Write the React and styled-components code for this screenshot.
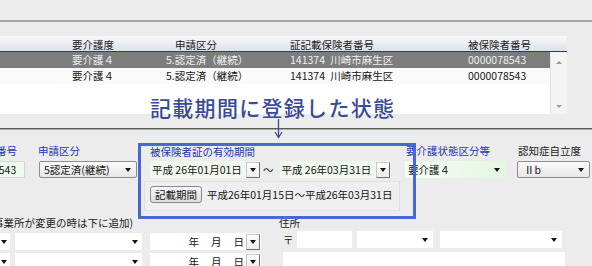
import React from "react";
import styled, { createGlobalStyle, css } from "styled-components";

const Global = createGlobalStyle`
  html, body { margin: 0; padding: 0; background: #ececec; }
  body { font-family: "Noto Sans CJK JP", "Noto Sans", sans-serif; }
`;

const Page = styled.div`
  position: relative;
  width: 592px;
  height: 266px;
  overflow: hidden;
  background: #ececec;
  font-family: "Noto Sans CJK JP", "Noto Sans", sans-serif;
  font-size: 10.5px;
  color: #141414;
`;

const TopStrip = styled.div`
  height: 20px;
  background: #ebebeb;
  border-bottom: 2px solid #a3a3a3;
`;

const ListWrap = styled.div`
  padding-top: 14px;
  width: 567px;
`;

const HeaderRow = styled.div`
  display: grid;
  grid-template-columns: 72px 94px 124px 178px 1fr;
  height: 15px;
  line-height: 17px;
  background: linear-gradient(#f8f9fb, #dce2e9);
  border-bottom: 1px solid #27415f;
  color: #222;
`;

const Cell = styled.div`
  white-space: nowrap;
  padding-left: ${(p) => p.$indent || 0}px;
  word-spacing: 3px;
`;

const ListBody = styled.div`
  display: flex;
  height: 62px;
  background: #fff;
`;

const Rows = styled.div`
  width: 550px;
`;

const Row = styled.div`
  display: grid;
  grid-template-columns: 72px 94px 124px 178px 1fr;
  height: 16px;
  line-height: 16px;
  ${(p) =>
    p.$selected
      ? css`
          background: #7d7d7d;
          color: #f1f1f1;
        `
      : css`
          background: #fafafa;
          color: #151515;
        `}
`;

const Scrollbar = styled.div`
  width: 17px;
  display: flex;
  flex-direction: column;
  justify-content: space-between;
  align-items: center;
  padding: 9px 0 6px;
  box-sizing: border-box;
  background: #f4f4f4;
  border-left: 1px solid #e4e4e4;
`;

const ScrollArrow = styled.span`
  width: 0;
  height: 0;
  border-left: 3px solid transparent;
  border-right: 3px solid transparent;
  ${(p) =>
    p.$down
      ? css`border-top: 3px solid #9a9a9a;`
      : css`border-bottom: 3px solid #9a9a9a;`}
`;

const Caption = styled.div`
  position: absolute;
  left: 150px;
  top: 95px;
  font-size: 21px;
  line-height: 24px;
  letter-spacing: 1.3px;
  font-weight: 500;
  color: #3b4a96;
  white-space: nowrap;
`;

const CalloutArrow = styled.svg`
  position: absolute;
  left: 274px;
  top: 119px;
`;

const Divider = styled.div`
  margin-top: 14px;
  border-top: 1px solid #5a5a5a;
  border-bottom: 1px solid #a9a9a9;
`;

const FormRow = styled.div`
  display: flex;
  align-items: flex-start;
  padding-top: 13px;
`;

const Group = styled.div`
  flex: none;
  width: ${(p) => p.$w}px;
  margin-left: ${(p) => p.$ml || 0}px;
  padding-top: 1px;
`;

const Label = styled.div`
  height: 13px;
  line-height: 13px;
  white-space: nowrap;
  color: ${(p) => (p.$blue ? "#2536b0" : "#222")};
  margin-left: ${(p) => p.$ml || 0}px;
  padding-left: ${(p) => p.$pl || 0}px;
`;

const TextField = styled.div`
  box-sizing: border-box;
  margin-top: 4px;
  height: 17px;
  line-height: 15px;
  padding-left: 3px;
  background: #effaec;
  border: 1px solid #d3d6d3;
  white-space: nowrap;
`;

const Select = styled.div`
  box-sizing: border-box;
  flex: none;
  display: flex;
  align-items: center;
  justify-content: space-between;
  width: ${(p) => p.$w}px;
  height: 17px;
  margin-top: ${(p) => p.$mt ?? 0}px;
  margin-left: ${(p) => p.$ml || 0}px;
  padding: 0 ${(p) => p.$pr ?? 6}px 0 ${(p) => p.$pl ?? 3}px;
  line-height: 15px;
  white-space: nowrap;
  ${(p) =>
    p.$variant === "combo" &&
    css`
      border: 1px solid #8d8d8d;
      border-radius: 2px;
      background: linear-gradient(#fbfbfb, #e7e7e7);
    `}
  ${(p) =>
    p.$variant === "green" &&
    css`
      background: linear-gradient(90deg, #f6fcf5, #e4f6e2);
    `}
  ${(p) =>
    p.$variant === "plain" &&
    css`
      background: #ffffff;
    `}
`;

const DropArrow = styled.span`
  flex: none;
  width: 0;
  height: 0;
  border-left: 3.5px solid transparent;
  border-right: 3.5px solid transparent;
  border-top: 4px solid #151515;
`;

const HighlightBox = styled.div`
  position: relative;
  z-index: 2;
  flex: none;
  box-sizing: border-box;
  width: 278px;
  margin-left: 1px;
  padding: 0 6px 5px 9px;
  border: 3px solid #4669d2;
`;

const BoxLabel = styled.div`
  height: 11px;
  line-height: 11px;
  white-space: nowrap;
  color: #2536b0;
`;

const DateRow = styled.div`
  display: flex;
  align-items: center;
  margin-top: 4px;
`;

const DateField = styled.div`
  box-sizing: border-box;
  flex: none;
  display: flex;
  align-items: center;
  justify-content: ${(p) => (p.$end ? "flex-end" : "space-between")};
  gap: ${(p) => (p.$end ? "2px" : "0")};
  width: ${(p) => p.$w}px;
  height: 17px;
  margin-left: ${(p) => p.$ml || 0}px;
  padding-left: 2px;
  padding-right: ${(p) => p.$pr || 0}px;
  line-height: 15px;
  white-space: nowrap;
  background: ${(p) => (p.$green ? "#f1f9ef" : "#ffffff")};
`;

const YMD = styled.span`
  display: flex;
  gap: 12px;
`;

const DropButton = styled.span`
  box-sizing: border-box;
  flex: none;
  display: flex;
  align-items: center;
  justify-content: center;
  width: 14px;
  height: 16px;
  background: linear-gradient(#fdfdfd, #ececec);
  border: 1px solid #c9c9c9;
  border-right-color: #6f6f6f;
  border-bottom-color: #6f6f6f;
`;

const Tilde = styled.span`
  flex: none;
  margin: 0 6px 0 3px;
`;

const PeriodPanel = styled.div`
  display: flex;
  align-items: center;
  margin: 3px 7px 0 -6px;
  padding: 4px 5px 7px;
  background: #efefef;
  border: 1px solid #e0e0e0;
`;

const PeriodButton = styled.span`
  box-sizing: border-box;
  flex: none;
  width: 52px;
  height: 17px;
  line-height: 15px;
  text-align: center;
  border: 1px solid #8a8a8a;
  border-radius: 3px;
  background: linear-gradient(#f8f8f8, #dddddd);
`;

const PeriodText = styled.span`
  margin-left: 5px;
  white-space: nowrap;
`;

const Lower = styled.div`
  display: flex;
  margin-top: -4px;
`;

const LeftCol = styled.div`
  flex: none;
  width: 262px;
  padding-top: 1px;
`;

const RightCol = styled.div`
  flex: none;
  width: 286px;
  margin-left: 17px;
  padding-top: 1px;
`;

const FieldRow = styled.div`
  display: flex;
  align-items: center;
  margin-top: ${(p) => p.$mt}px;
`;

const PostMark = styled.span`
  flex: none;
  width: 11px;
  margin: 0 3px 0 4px;
  line-height: 15px;
`;

const PostField = styled.div`
  flex: none;
  width: 55px;
  height: 17px;
  background: #fff;
`;

const AddressArea = styled.div`
  margin: 4px 0 0 4px;
  width: 282px;
  height: 30px;
  background: #fff;
`;

const periodDate = (text) => (
  <DateField $w={110} $green>
    <span>{text}</span>
    <DropButton>
      <DropArrow />
    </DropButton>
  </DateField>
);

const EmptyDate = () => (
  <DateField $w={111} $end $pr={1} $ml={8}>
    <YMD>
      <span>年</span>
      <span>月</span>
      <span>日</span>
    </YMD>
    <DropButton>
      <DropArrow />
    </DropButton>
  </DateField>
);

const LowerFieldRow = ({ mt }) => (
  <FieldRow $mt={mt}>
    <Select $w={18} $ml={-8} $variant="plain" $pr={3}>
      <span />
      <DropArrow />
    </Select>
    <Select $w={127} $ml={5} $variant="plain" $pr={4}>
      <span />
      <DropArrow />
    </Select>
    <EmptyDate />
  </FieldRow>
);

export default function App() {
  return (
    <Page>
      <Global />
      <TopStrip />
      <ListWrap>
        <HeaderRow>
          <Cell />
          <Cell>要介護度</Cell>
          <Cell $indent={9}>申請区分</Cell>
          <Cell>証記載保険者番号</Cell>
          <Cell>被保険者番号</Cell>
        </HeaderRow>
        <ListBody>
          <Rows>
            <Row $selected>
              <Cell />
              <Cell>要介護４</Cell>
              <Cell>5.認定済（継続）</Cell>
              <Cell>141374 川崎市麻生区</Cell>
              <Cell>0000078543</Cell>
            </Row>
            <Row>
              <Cell />
              <Cell>要介護４</Cell>
              <Cell>5.認定済（継続）</Cell>
              <Cell>141374 川崎市麻生区</Cell>
              <Cell>0000078543</Cell>
            </Row>
          </Rows>
          <Scrollbar>
            <ScrollArrow />
            <ScrollArrow $down />
          </Scrollbar>
        </ListBody>
      </ListWrap>
      <Divider />

      <FormRow>
        <Group $w={71} $ml={-46}>
          <Label $blue>被保険者番号</Label>
          <TextField>0000078543</TextField>
        </Group>
        <Group $w={99} $ml={13}>
          <Label $blue>申請区分</Label>
          <Select $w={98} $ml={1} $mt={4} $variant="combo" $pr={5} $pl={4}>
            <span>5認定済(継続)</span>
            <DropArrow />
          </Select>
        </Group>
        <HighlightBox>
          <BoxLabel>被保険者証の有効期間</BoxLabel>
          <DateRow>
            {periodDate("平成 26年01月01日")}
            <Tilde>～</Tilde>
            {periodDate("平成 26年03月31日")}
          </DateRow>
          <PeriodPanel>
            <PeriodButton>記載期間</PeriodButton>
            <PeriodText>平成26年01月15日～平成26年03月31日</PeriodText>
          </PeriodPanel>
        </HighlightBox>
        <Group $w={101} $ml={-11}>
          <Label $blue $pl={1}>要介護状態区分等</Label>
          <Select $w={101} $mt={4} $variant="green" $pr={6}>
            <span>要介護４</span>
            <DropArrow />
          </Select>
        </Group>
        <Group $w={73} $ml={11}>
          <Label $pl={1}>認知症自立度</Label>
          <Select $w={73} $mt={4} $variant="combo" $pr={5} $pl={6}>
            <span>Ⅱb</span>
            <DropArrow />
          </Select>
        </Group>
      </FormRow>

      <Lower>
        <LeftCol>
          <Label $ml={-7}>事業所が変更の時は下に追加)</Label>
          <LowerFieldRow mt={4} />
          <LowerFieldRow mt={3} />
        </LeftCol>
        <RightCol>
          <Label>住所</Label>
          <FieldRow $mt={2}>
            <PostMark>〒</PostMark>
            <PostField />
            <Select $w={76} $ml={5} $variant="plain" $pr={5}>
              <span />
              <DropArrow />
            </Select>
            <Select $w={122} $ml={7} $variant="plain" $pr={5}>
              <span />
              <DropArrow />
            </Select>
          </FieldRow>
          <AddressArea />
        </RightCol>
      </Lower>

      <Caption>記載期間に登録した状態</Caption>
      <CalloutArrow width="9" height="20" viewBox="0 0 9 20">
        <line x1="4.5" y1="0" x2="4.5" y2="18" stroke="#3b4a96" strokeWidth="1.3" />
        <polyline points="1,13 4.5,18.5 8,13" fill="none" stroke="#3b4a96" strokeWidth="1.3" />
      </CalloutArrow>
    </Page>
  );
}
